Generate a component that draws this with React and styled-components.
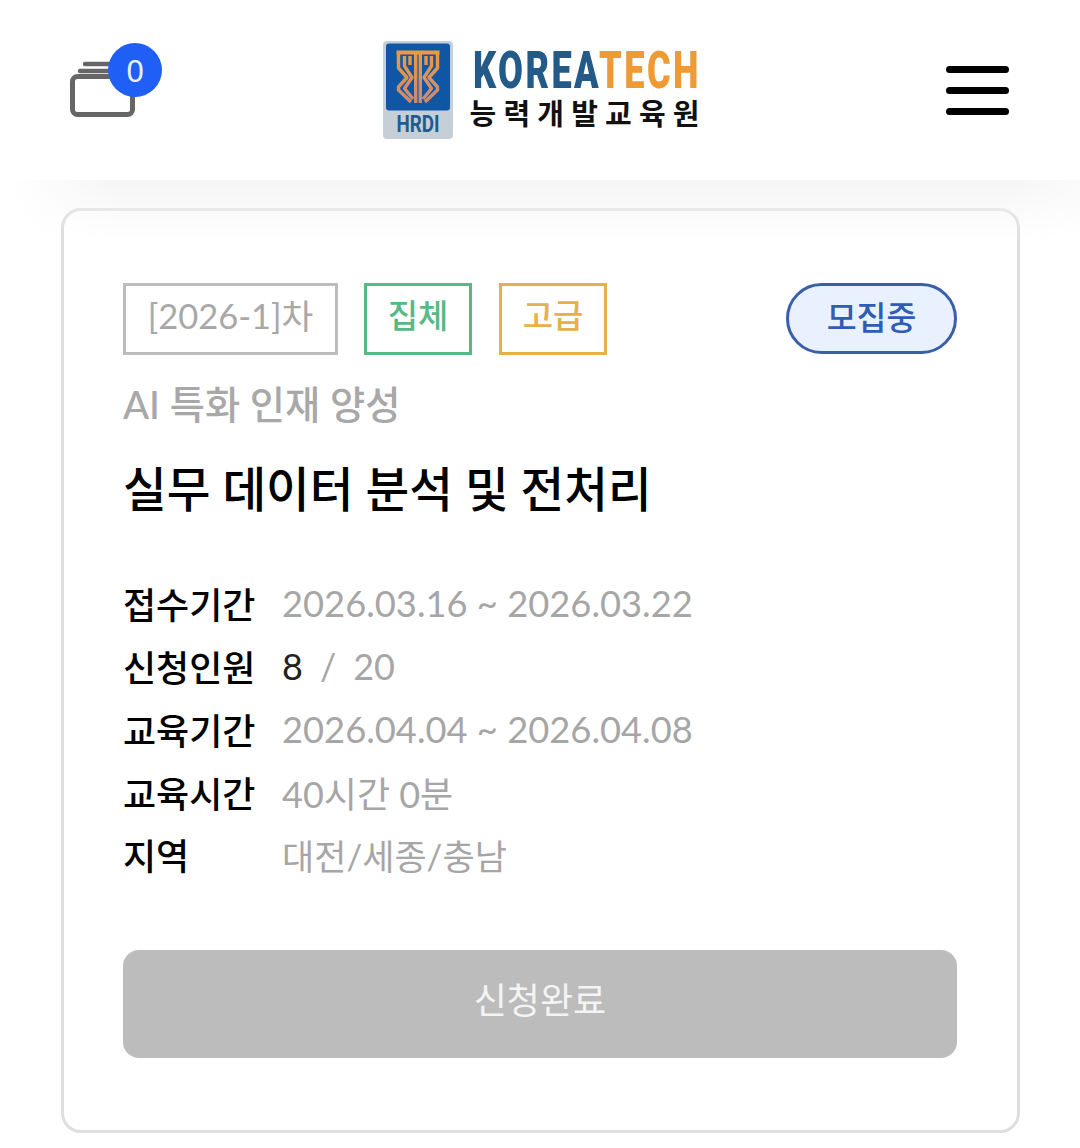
import React from "react";
import styled, { createGlobalStyle } from "styled-components";

const Global = createGlobalStyle`
  html, body { margin: 0; padding: 0; background: #fff; }
  body { font-family: Lato, "Noto Sans CJK KR", sans-serif; }
  * { box-sizing: border-box; }
`;
const Page = styled.div`
  width: 1080px;
  height: 1148px;
  overflow: hidden;
  background: #fff;
`;
const Header = styled.header`
  position: relative;
  z-index: 2;
  height: 180px;
  background: #fff;
  padding: 0 70px;
  display: grid;
  grid-template-columns: 1fr auto 1fr;
  align-items: center;
  &::after {
    content: "";
    position: absolute;
    left: 0; right: 0; top: 180px; height: 60px;
    pointer-events: none;
    background: linear-gradient(#f5f5f5, rgba(255,255,255,0));
    -webkit-mask-image: linear-gradient(90deg, transparent 10px, #000 120px, #000 1000px, rgba(0,0,0,.5) 100%);
  }
`;
const CartWrap = styled.div`
  position: relative;
  width: 92px;
  height: 80px;
  margin-top: -14px;
`;
const CartBadge = styled.span`
  position: absolute;
  left: 38px; top: 0;
  width: 54px; height: 54px;
  border-radius: 50%;
  background: #1f5ff5;
  color: #e8f0ff;
  font-size: 31px;
  display: flex;
  align-items: center;
  justify-content: center;
  font-family: "Noto Sans", sans-serif;
`;
const Logo = styled.div`
  display: flex;
  align-items: center;
  gap: 17px;
  margin-left: 4px;
`;
const LogoText = styled.div`
  display: flex;
  flex-direction: column;
`;
const Brand = styled.div`
  font-family: Roboto, sans-serif;
  font-weight: 900;
  font-size: 52px;
  line-height: 42px;
  height: 44px;
  width: 232px;
  padding-left: 3px;
  white-space: nowrap;
  color: #235a88;
  & > span { display: inline-block; transform: scaleX(.695); transform-origin: left; letter-spacing: 3.5px; }
  & > span > em { font-style: normal; color: #ee9b35; }
`;
const BrandSub = styled.div`
  font-family: "Noto Sans CJK KR", sans-serif;
  font-weight: 700;
  font-size: 29px;
  line-height: 36px;
  color: #111;
  white-space: nowrap;
  display: flex;
  justify-content: space-between;
  width: 230px;
`;
const Burger = styled.div`
  justify-self: end;
  width: 63px;
  margin-right: 1px;
  display: flex;
  flex-direction: column;
  gap: 14px;
  & > i { display: block; height: 7px; border-radius: 4px; background: #000; }
`;
const Main = styled.main`
  padding: 28px 61px 0;
`;
const Card = styled.section`
  width: 959px;
  height: 925px;
  border: 3px solid #dedede;
  border-radius: 20px;
  padding: 72px 59px 0 59px;
  background: #fff;
`;
const TagRow = styled.div`
  display: flex;
  align-items: flex-start;
`;
const Tag = styled.span`
  height: 72px;
  width: ${p => p.$w}px;
  margin-right: ${p => p.$gap}px;
  border: 3px solid ${p => p.$c};
  color: ${p => p.$t || p.$c};
  font-size: ${p => p.$size || 34.5}px;
  font-weight: ${p => p.$b || 400};
  display: flex;
  align-items: center;
  justify-content: center;
  padding-bottom: 10px;
`;
const Status = styled.span`
  margin-left: auto;
  margin-right: 1px;
  width: 171px;
  height: 71px;
  border: 3px solid #3a5fa9;
  border-radius: 36px;
  background: #e9f1fe;
  color: #2f5cb5;
  font-size: 32.5px;
  font-weight: 500;
  display: flex;
  align-items: center;
  justify-content: center;
  padding-bottom: 6px;
`;
const Category = styled.div`
  margin-top: 22px;
  font-size: 38.3px;
  line-height: 54px;
  font-weight: 500;
  color: #a8a8a8;
`;
const Title = styled.h2`
  margin: 26px 0 0;
  font-size: 47.5px;
  line-height: 64px;
  font-weight: 500;
  color: #000;
`;
const Rows = styled.dl`
  margin: 51px 0 0;
  display: grid;
  grid-template-columns: 159px 1fr;
  grid-auto-rows: 62.75px;
  align-items: center;
  font-size: 36px;
`;
const Label = styled.dt`
  color: #000;
  font-weight: 500;
`;
const Value = styled.dd`
  margin: 0;
  color: #a6a6a6;
  font-size: ${p => p.$size}px;
  font-weight: 400;
  & > b { color: #222; font-weight: 400; }
`;
const Slash = styled.span`
  margin: 0 17px;
`;
const Submit = styled.button`
  display: block;
  margin-top: 64px;
  width: 834px;
  height: 108px;
  border: 0;
  border-radius: 16px;
  background: #bcbcbc;
  color: #f4f4f4;
  font-family: inherit;
  font-size: 36px;
  font-weight: 400;
  padding-bottom: 12px;
`;

const CartIcon = () => (
  <svg width="70" height="60" viewBox="0 0 70 60" style={{ position: "absolute", left: 0, top: 18 }}>
    <path d="M15 3H50M10 10H50" stroke="#666" strokeWidth="4.5" strokeLinecap="round" fill="none" />
    <rect x="2.5" y="15.5" width="60" height="38" rx="5" fill="#fff" stroke="#666" strokeWidth="5" />
  </svg>
);
const Side = () => (
  <g stroke="url(#g)" strokeWidth="3.4" fill="none" strokeLinejoin="round">
    <path d="M15.5 12V27L24 36.5 15.5 46V49L28 61" />
    <path d="M21.5 15V25L29 36.5 21.5 47.5 30 58" />
    <path d="M27 15V24" />
    <path d="M32.7 10V62" />
  </g>
);
const Shield = () => (
  <svg width="70" height="98" viewBox="0 0 70 98" style={{ flex: "none" }}>
    <defs>
      <linearGradient id="g" gradientUnits="userSpaceOnUse" x1="0" y1="10" x2="0" y2="62">
        <stop offset="0" stopColor="#ef9a3a" />
        <stop offset="1" stopColor="#c98a78" />
      </linearGradient>
    </defs>
    <rect width="70" height="98" rx="4" fill="#c6ced8" />
    <rect x="3" y="2.5" width="64" height="67" rx="3" fill="#0f57a5" />
    <path d="M13.5 11.5H56.5" stroke="url(#g)" strokeWidth="4" />
    <Side />
    <g transform="translate(70 0) scale(-1 1)"><Side /></g>
    <text x="35" y="91" textAnchor="middle" fontFamily="Roboto, sans-serif" fontWeight="700" fontSize="23" fill="#1f5b8e" textLength="43" lengthAdjust="spacingAndGlyphs">HRDI</text>
  </svg>
);

const rows = [
  ["접수기간", "2026.03.16 ~ 2026.03.22", 36.3],
  ["신청인원", null, 36],
  ["교육기간", "2026.04.04 ~ 2026.04.08", 36.3],
  ["교육시간", "40시간 0분", 36],
  ["지역", "대전/세종/충남", 35],
];

export default function App() {
  return (
    <Page>
      <Global />
      <Header>
        <CartWrap>
          <CartIcon />
          <CartBadge>0</CartBadge>
        </CartWrap>
        <Logo>
          <Shield />
          <LogoText>
            <Brand><span>KOREA<em>TECH</em></span></Brand>
            <BrandSub>
              {"능력개발교육원".split("").map((c, i) => <span key={i}>{c}</span>)}
            </BrandSub>
          </LogoText>
        </Logo>
        <Burger><i /><i /><i /></Burger>
      </Header>
      <Main>
        <Card>
          <TagRow>
            <Tag $w={215} $gap={26} $c="#bcbcbc" $t="#a8a8a8">[2026-1]차</Tag>
            <Tag $w={108} $gap={27} $c="#58b985" $b={500} $size={33}>집체</Tag>
            <Tag $w={108} $gap={0} $c="#e6b04a" $b={500} $size={33}>고급</Tag>
            <Status>모집중</Status>
          </TagRow>
          <Category>AI 특화 인재 양성</Category>
          <Title>실무 데이터 분석 및 전처리</Title>
          <Rows>
            {rows.map(([k, v, s]) => (
              <React.Fragment key={k}>
                <Label>{k}</Label>
                <Value $size={s}>{v ?? <><b>8</b><Slash>/</Slash>20</>}</Value>
              </React.Fragment>
            ))}
          </Rows>
          <Submit>신청완료</Submit>
        </Card>
      </Main>
    </Page>
  );
}
